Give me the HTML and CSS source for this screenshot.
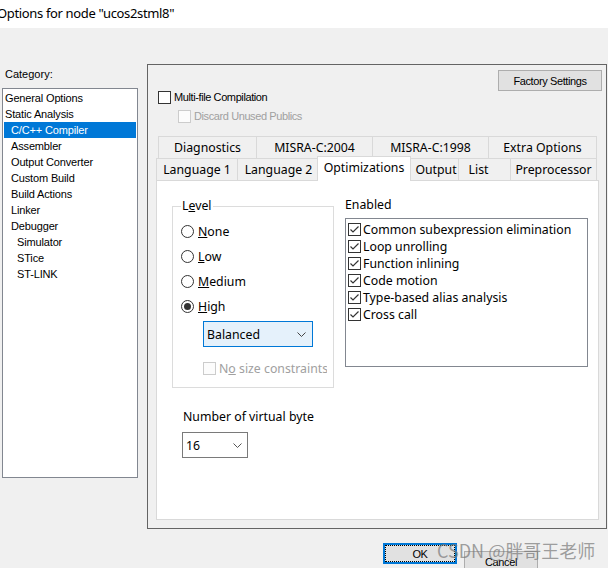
FILE: index.html
```html
<!DOCTYPE html>
<html>
<head>
<meta charset="utf-8">
<title>Options</title>
<link rel="stylesheet" href="styles.css">
</head>
<body>
<div class="titlebar">Options for node "ucos2stml8"</div>
<div class="main">
  <div class="cat">
    <div class="cat-label">Category:</div>
    <ul class="cat-list">
      <li class="l1">General Options</li>
      <li class="l1">Static Analysis</li>
      <li class="l2 sel">C/C++ Compiler</li>
      <li class="l2">Assembler</li>
      <li class="l2">Output Converter</li>
      <li class="l2">Custom Build</li>
      <li class="l2">Build Actions</li>
      <li class="l2">Linker</li>
      <li class="l2">Debugger</li>
      <li class="l3">Simulator</li>
      <li class="l3">STice</li>
      <li class="l3">ST-LINK</li>
    </ul>
  </div>
  <div class="panel">
    <div class="factory-row"><button class="btn factory">Factory Settings</button></div>
    <div class="chk multi">
      <svg class="box" width="13" height="13" viewBox="0 0 13 13"><rect x="0.5" y="0.5" width="12" height="12" fill="#fff" stroke="#333"/></svg>
      <span>Multi-file Compilation</span>
    </div>
    <div class="chk discard">
      <svg class="box" width="13" height="13" viewBox="0 0 13 13"><rect x="0.5" y="0.5" width="12" height="12" fill="#fcfcfc" stroke="#cccccc"/></svg>
      <span>Discard Unused Publics</span>
    </div>
    <div class="tabs">
      <div class="tabrow back">
        <div class="tab t-diag">Diagnostics</div>
        <div class="tab t-m04">MISRA-C:2004</div>
        <div class="tab t-m98">MISRA-C:1998</div>
        <div class="tab t-extra last">Extra Options</div>
      </div>
      <div class="tabrow front">
        <div class="tab t-lang1">Language 1</div>
        <div class="tab t-lang2">Language 2</div>
        <div class="tab t-opt active">Optimizations</div>
        <div class="tab t-out">Output</div>
        <div class="tab t-list">List</div>
        <div class="tab t-pre last">Preprocessor</div>
      </div>
      <div class="page">
        <div class="upper">
          <fieldset class="level">
            <legend>L<u>e</u>vel</legend>
            <div class="radios">
              <div class="radio">
                <svg width="13" height="13" viewBox="0 0 13 13"><circle cx="6.5" cy="6.5" r="6" fill="#fff" stroke="#333"/></svg>
                <span><u>N</u>one</span>
              </div>
              <div class="radio">
                <svg width="13" height="13" viewBox="0 0 13 13"><circle cx="6.5" cy="6.5" r="6" fill="#fff" stroke="#333"/></svg>
                <span><u>L</u>ow</span>
              </div>
              <div class="radio">
                <svg width="13" height="13" viewBox="0 0 13 13"><circle cx="6.5" cy="6.5" r="6" fill="#fff" stroke="#333"/></svg>
                <span><u>M</u>edium</span>
              </div>
              <div class="radio">
                <svg width="13" height="13" viewBox="0 0 13 13"><circle cx="6.5" cy="6.5" r="6" fill="#fff" stroke="#333"/><circle cx="6.5" cy="6.5" r="3.5" fill="#333"/></svg>
                <span><u>H</u>igh</span>
              </div>
            </div>
            <div class="combo focus">
              <span>Balanced</span>
              <svg width="9" height="5" viewBox="0 0 9 5"><path d="M0.5 0.5 L4.5 4.5 L8.5 0.5" fill="none" stroke="#444"/></svg>
            </div>
            <div class="chk nosize">
              <svg class="box" width="13" height="13" viewBox="0 0 13 13"><rect x="0.5" y="0.5" width="12" height="12" fill="#fcfcfc" stroke="#cccccc"/></svg>
              <span>N<u>o</u> size constraints</span>
            </div>
          </fieldset>
          <div class="enabled">
            <div class="en-label">Enabled</div>
            <div class="en-list">
              <div class="en-item"><svg width="13" height="13" viewBox="0 0 13 13"><rect x="0.5" y="0.5" width="12" height="12" fill="#fff" stroke="#333"/><path d="M2.5 6.5 L5 9 L10.5 3.5" fill="none" stroke="#333" stroke-width="1.2"/></svg><span>Common subexpression elimination</span></div>
              <div class="en-item"><svg width="13" height="13" viewBox="0 0 13 13"><rect x="0.5" y="0.5" width="12" height="12" fill="#fff" stroke="#333"/><path d="M2.5 6.5 L5 9 L10.5 3.5" fill="none" stroke="#333" stroke-width="1.2"/></svg><span>Loop unrolling</span></div>
              <div class="en-item"><svg width="13" height="13" viewBox="0 0 13 13"><rect x="0.5" y="0.5" width="12" height="12" fill="#fff" stroke="#333"/><path d="M2.5 6.5 L5 9 L10.5 3.5" fill="none" stroke="#333" stroke-width="1.2"/></svg><span>Function inlining</span></div>
              <div class="en-item"><svg width="13" height="13" viewBox="0 0 13 13"><rect x="0.5" y="0.5" width="12" height="12" fill="#fff" stroke="#333"/><path d="M2.5 6.5 L5 9 L10.5 3.5" fill="none" stroke="#333" stroke-width="1.2"/></svg><span>Code motion</span></div>
              <div class="en-item"><svg width="13" height="13" viewBox="0 0 13 13"><rect x="0.5" y="0.5" width="12" height="12" fill="#fff" stroke="#333"/><path d="M2.5 6.5 L5 9 L10.5 3.5" fill="none" stroke="#333" stroke-width="1.2"/></svg><span>Type-based alias analysis</span></div>
              <div class="en-item"><svg width="13" height="13" viewBox="0 0 13 13"><rect x="0.5" y="0.5" width="12" height="12" fill="#fff" stroke="#333"/><path d="M2.5 6.5 L5 9 L10.5 3.5" fill="none" stroke="#333" stroke-width="1.2"/></svg><span>Cross call</span></div>
            </div>
          </div>
        </div>
        <div class="num-label">Number of virtual byte</div>
        <div class="combo small">
          <span>16</span>
          <svg width="9" height="5" viewBox="0 0 9 5"><path d="M0.5 0.5 L4.5 4.5 L8.5 0.5" fill="none" stroke="#555"/></svg>
        </div>
      </div>
    </div>
  </div>
</div>
<div class="bottom">
  <button class="btn ok">OK</button>
  <button class="btn cancel">Cancel</button>
</div>
<div class="watermark">CSDN @胖哥王老师</div>
</body>
</html>
```
FILE: styles.css
```css
* { box-sizing: border-box; }
html, body { margin: 0; padding: 0; }
body {
  width: 608px;
  height: 568px;
  overflow: hidden;
  position: relative;
  background: #f0f0f0;
  color: #000;
  font-family: "Noto Sans", sans-serif;
}
.titlebar {
  height: 28px;
  background: #fff;
  font-size: 13px;
  line-height: 26px;
  letter-spacing: -0.35px;
  text-indent: -3px;
  white-space: nowrap;
}
.main {
  display: flex;
  align-items: flex-start;
  padding-top: 36px;
}
.cat {
  width: 136px;
  margin-left: 2px;
}
.cat-label {
  font: 11px/14px "Liberation Sans", sans-serif;
  height: 14px;
  margin-top: 3px;
  margin-bottom: 7px;
  padding-left: 3px;
}
.cat-list {
  list-style: none;
  margin: 0;
  padding: 1px 0 0;
  height: 390px;
  background: #fff;
  border: 1px solid #828790;
  font: 11px/16px "Liberation Sans", sans-serif;
  letter-spacing: -0.15px;
}
.cat-list li {
  height: 16px;
  margin: 0 1px;
  white-space: nowrap;
}
.cat-list .l1 { padding-left: 1px; }
.cat-list .l2 { padding-left: 7px; }
.cat-list .l3 { padding-left: 13px; }
.cat-list .sel { background: #0078d7; color: #fff; }

.panel {
  margin-left: 9px;
  width: 460px;
  height: 465px;
  border: 1px solid #646464;
  display: flex;
  flex-direction: column;
}
.btn {
  background: #e1e1e1;
  border: 1px solid #adadad;
  font: 11px "Liberation Sans", sans-serif;
  letter-spacing: -0.4px;
  color: #000;
  padding: 0;
  margin: 0;
}
.factory-row {
  display: flex;
  justify-content: flex-end;
  margin-top: 5px;
  padding-right: 4px;
}
.factory { width: 104px; height: 21px; }

.chk {
  display: flex;
  align-items: center;
  gap: 3px;
  height: 13px;
  font: 11px/13px "Liberation Sans", sans-serif;
  letter-spacing: -0.4px;
  white-space: nowrap;
}
.chk .box { flex: none; }
.multi { margin-left: 10px; }
.discard { margin-left: 30px; margin-top: 6px; color: #a0a0a0; }

.tabs { margin-top: 13px; }
.tabrow {
  display: flex;
  align-items: flex-start;
  height: 22px;
  font-size: 12.3px;
}
.tabrow.back { margin-left: 10px; }
.tabrow.front { margin-left: 8px; }
.tab {
  height: 22px;
  flex: none;
  border-top: 1px solid #d9d9d9;
  border-left: 1px solid #d9d9d9;
  display: flex;
  align-items: center;
  justify-content: center;
  white-space: nowrap;
}
.tab.last { border-right: 1px solid #d9d9d9; }
.t-diag { width: 98px; }
.t-m04 { width: 116px; }
.t-m98 { width: 116px; }
.t-extra { width: 109px; }
.t-lang1 { width: 81px; }
.t-lang2 { width: 82px; }
.t-opt { width: 90px; }
.t-out { width: 49px; padding-left: 4px; }
.t-list { width: 52px; padding-right: 12px; }
.t-pre { width: 87px; }
.tab.active {
  width: 94px;
  height: 25px;
  margin: -2px -2px -1px;
  background: #fff;
  border: 1px solid #d9d9d9;
  border-bottom: none;
  padding-bottom: 3px;
  position: relative;
  z-index: 1;
}

.page {
  margin-left: 8px;
  width: 443px;
  height: 340px;
  background: #fff;
  border: 1px solid #d9d9d9;
  padding-top: 17px;
  font-size: 12.3px;
}
.upper {
  display: flex;
  align-items: flex-start;
}
fieldset.level {
  margin: 0 0 0 15px;
  padding: 0 0 0 8px;
  width: 162px;
  height: 190px;
  min-width: 0;
  border: 1px solid #dcdcdc;
}
fieldset.level legend {
  padding: 0 1px;
  line-height: 16px;
}
.radios { padding-top: 5px; }
.radio {
  display: flex;
  align-items: center;
  gap: 4px;
  height: 25px;
}
.radio svg { flex: none; }
.combo {
  display: flex;
  align-items: center;
  justify-content: space-between;
}
.combo.focus {
  margin: 2px 0 0 22px;
  width: 110px;
  height: 26px;
  background: #e5f1fb;
  border: 1px solid #0078d7;
  padding: 0 6px 0 3px;
}
.nosize {
  margin: 15px 0 0 22px;
  width: 124px;
  overflow: hidden;
  font: 12.3px/13px "Noto Sans", sans-serif;
  letter-spacing: 0;
  color: #a0a0a0;
}
.enabled { margin-left: 11px; }
.en-label { line-height: 14px; }
.en-list {
  margin-top: 6px;
  width: 243px;
  height: 149px;
  border: 1px solid #828790;
  padding: 2px 0 0 2px;
}
.en-item {
  display: flex;
  align-items: center;
  gap: 2px;
  height: 17px;
  white-space: nowrap;
}
.en-item svg { flex: none; }
.num-label {
  margin: 21px 0 0 26px;
  line-height: 16px;
}
.combo.small {
  margin: 7px 0 0 25px;
  width: 66px;
  height: 26px;
  background: #fff;
  border: 1px solid #7a7a7a;
  padding: 0 5px 0 3px;
}

.bottom {
  display: flex;
  align-items: flex-start;
  padding-left: 383px;
}
.ok {
  margin-top: 14px;
  width: 74px;
  height: 21px;
  border: 2px solid #0078d7;
  outline: 1px dotted #000;
  outline-offset: -3px;
}
.cancel {
  margin-top: 22px;
  margin-left: 7px;
  width: 74px;
  height: 21px;
}
.watermark {
  position: absolute;
  left: 437px;
  top: 538px;
  font: 18px/24px "Noto Sans CJK SC", sans-serif;
  color: rgba(120, 120, 120, 0.7);
  white-space: nowrap;
}
```
